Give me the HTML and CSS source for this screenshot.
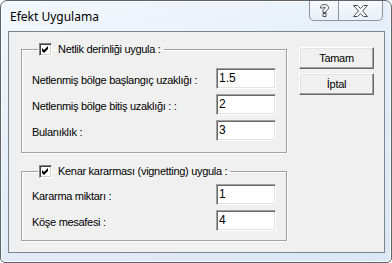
FILE: index.html
```html
<!DOCTYPE html>
<html>
<head>
    <link rel="stylesheet" href="styles.css">
</head>
<body>
    <div class="window">
        <div class="titlebar">
            <span class="title">Efekt Uygulama</span>
            <div class="caption-btns">
                <span class="cap-btn help">
                    <svg width="11" height="13" viewBox="0 0 11 13">
                        <path d="M1.5 4 C1.5 1.5 3 0.5 5.5 0.5 C8 0.5 9.5 1.8 9.5 3.8 C9.5 5.6 8 6.3 7 6.9 L7 8.5 L4 8.5 L4 6.3 C4 5.3 6.4 4.8 6.4 3.8 C6.4 3.2 6 2.9 5.5 2.9 C4.9 2.9 4.5 3.3 4.5 4 Z M4 9.5 L7 9.5 L7 12.5 L4 12.5 Z" fill="#fff" stroke="#4a4f57" stroke-width="1"/>
                    </svg>
                </span>
                <span class="cap-btn close">
                    <svg width="15" height="12" viewBox="0 0 15 12">
                        <path d="M0.5 0.5 L4.5 0.5 L7.5 3.5 L10.5 0.5 L14.5 0.5 L9.5 6 L14.5 11.5 L10.5 11.5 L7.5 8.5 L4.5 11.5 L0.5 11.5 L5.5 6 Z" fill="#fff" stroke="#4a4f57" stroke-width="1" stroke-linejoin="round"/>
                    </svg>
                </span>
            </div>
        </div>
        <div class="client">
            <div class="groups">
                <fieldset class="group group-dof">
                    <legend><span class="check"></span>Netlik derinliği uygula :</legend>
                    <div class="row"><span class="label">Netlenmiş bölge başlangıç uzaklığı :</span><span class="field">1.5</span></div>
                    <div class="row"><span class="label">Netlenmiş bölge bitiş uzaklığı : :</span><span class="field">2</span></div>
                    <div class="row"><span class="label">Bulanıklık :</span><span class="field">3</span></div>
                </fieldset>
                <fieldset class="group group-vig">
                    <legend><span class="check"></span>Kenar kararması (vignetting) uygula :</legend>
                    <div class="row"><span class="label">Kararma miktarı :</span><span class="field">1</span></div>
                    <div class="row"><span class="label">Köşe mesafesi :</span><span class="field">4</span></div>
                </fieldset>
            </div>
            <div class="buttons">
                <span class="btn">Tamam</span>
                <span class="btn">İptal</span>
            </div>
        </div>
    </div>
</body>
</html>
```

FILE: styles.css
```css
body {
    margin: 0;
    background: #ffffff;
    font-family: 'Liberation Sans', Arial, sans-serif;
    font-size: 11px;
    letter-spacing: -0.3px;
    color: #000;
}

.window {
    width: 392px;
    height: 263px;
    box-sizing: border-box;
    border: 1px solid #5b636d;
    border-radius: 7px 7px 5px 5px;
    background: linear-gradient(160deg, #f4f8fd 0%, #e4eef9 45%, #dbe7f4 100%);
    box-shadow: inset 0 0 0 1px #fafcff;
    display: flex;
    flex-direction: column;
}

.titlebar {
    height: 30px;
    display: flex;
    justify-content: space-between;
    align-items: flex-start;
    padding: 0 8px 0 9px;
}

.title {
    font-family: 'Noto Sans', 'Open Sans', sans-serif;
    font-size: 12px;
    letter-spacing: 0;
    line-height: 30px;
    margin-top: 1px;
}

.caption-btns {
    display: flex;
    border: 1px solid #8c939c;
    border-top: none;
    border-radius: 0 0 5px 5px;
    background: linear-gradient(#f6f9fd, #e9f0f8);
    height: 19px;
}

.cap-btn {
    display: flex;
    justify-content: center;
    align-items: center;
}

.help {
    width: 28px;
    border-right: 1px solid #8c939c;
}

.close {
    width: 43px;
}

.client {
    flex: 1;
    margin: 0 6px 9px 7px;
    border: 1px solid #7d858f;
    background: #f0f0f0;
    display: flex;
    align-items: flex-start;
}

.groups {
    margin: 10px 0 0 12px;
    display: flex;
    flex-direction: column;
}

.group {
    width: 266px;
    box-sizing: border-box;
    margin: 0;
    border: 1px solid #a0a0a0;
    box-shadow: inset 1px 1px 0 #fff, 1px 1px 0 #fff;
    padding: 12px 10px 11px 10px;
    min-width: 0;
}

.group-vig {
    margin-top: 11px;
    padding-top: 6px;
    padding-bottom: 9px;
}

legend {
    margin-left: 6px;
    padding: 0 3px 0 1px;
    height: 14px;
    line-height: 14px;
    display: flex;
    align-items: center;
}

.check {
    width: 13px;
    height: 13px;
    box-sizing: border-box;
    border: 1px solid;
    border-color: #808080 #ffffff #ffffff #808080;
    box-shadow: inset 1px 1px 0 #404040, inset -1px -1px 0 #d4d0c8;
    background: #fff url("data:image/svg+xml,%3Csvg xmlns='http://www.w3.org/2000/svg' width='7' height='7'%3E%3Cpath d='M0 2 L2 4 L6 0 L6 3 L2 7 L0 5 Z' fill='%23000'/%3E%3C/svg%3E") no-repeat 2px 2px;
    margin-right: 6px;
}

.row {
    display: flex;
    justify-content: space-between;
    align-items: center;
    height: 21px;
}

.row + .row {
    margin-top: 5px;
}

.label {
    padding-top: 2px;
}

.field {
    width: 60px;
    height: 21px;
    box-sizing: border-box;
    border: 1px solid;
    border-color: #a0a0a0 #ffffff #ffffff #a0a0a0;
    box-shadow: inset 1px 1px 0 #696969, inset -1px -1px 0 #e3e3e3;
    background: #fff;
    padding: 0 0 0 2px;
    line-height: 19px;
    font-size: 12px;
    letter-spacing: 0;
}

.buttons {
    margin: 15px 0 0 12px;
    display: flex;
    flex-direction: column;
    gap: 4px;
}

.btn {
    width: 75px;
    height: 22px;
    box-sizing: border-box;
    border: 1px solid;
    border-color: #ffffff #696969 #696969 #ffffff;
    box-shadow: inset -1px -1px 0 #a0a0a0, inset 1px 1px 0 #e3e3e3;
    background: #f0f0f0;
    display: flex;
    justify-content: center;
    align-items: center;
}
```
